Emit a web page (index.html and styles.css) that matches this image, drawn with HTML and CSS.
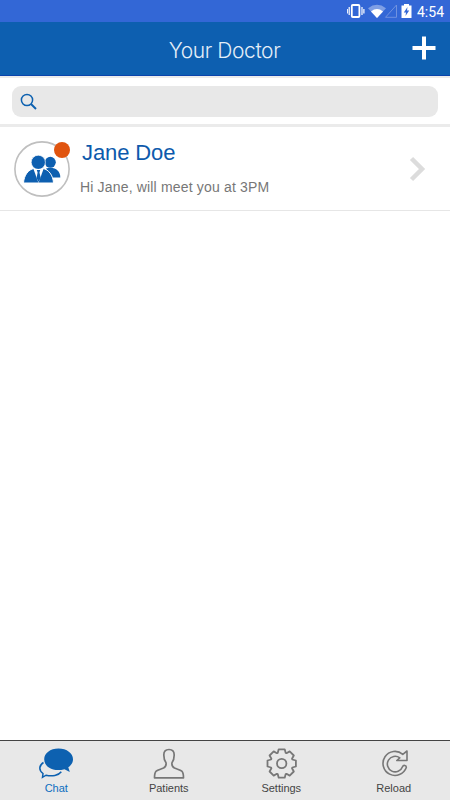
FILE: index.html
```html
<!DOCTYPE html>
<html lang="en">
<head>
    <meta charset="UTF-8">
    <meta name="viewport" content="width=device-width, initial-scale=1.0">
    <title>Your Doctor</title>
    <link rel="stylesheet" href="styles.css">
</head>
<body>
    <div class="app">
        <!-- Phone status bar -->
        <div class="status-bar">
            <svg class="status-icons" width="66" height="22" viewBox="0 0 66 22">
                <rect x="4.8" y="5" width="7.6" height="12" rx="1" fill="none" stroke="#fff" stroke-width="1.8"/>
                <path d="M2.200 7v8M15 7v8M.3 9v4.500M16.900 9v4.500" stroke="#fff" stroke-width="1.2"/>
                <path d="M21 8.200Q30 1.500 39 8.200L30 18z" fill="#7f9fe5"/>
                <path d="M24 11.400Q30 6.800 36 11.400L30 18z" fill="#fff"/>
                <path d="M38.500 17.300L49.500 5V17.300z" fill="none" stroke="#7092df"/>
                <path d="M54.500 5.500H57V4h5v1.500h2.500V18h-10z" fill="#fff"/>
                <path d="M60.500 7L56.800 12.500h2.200L58.500 16l3.700-5.500h-2.200z" fill="#3367d6"/>
            </svg>
            <span class="time">4:54</span>
        </div>

        <header class="header">
            <h1 class="title">Your Doctor</h1>
            <svg class="add" width="26" height="26" viewBox="0 0 26 26">
                <path d="M13 1.500v23M1.500 13h23" stroke="#fff" stroke-width="4"/>
            </svg>
        </header>

        <div class="search">
            <div class="search-box">
                <svg width="18" height="18" viewBox="0 0 18 18" fill="none" stroke="#0d61b0">
                    <circle cx="7" cy="7" r="5.600" stroke-width="1.500"/>
                    <path d="M11 11l5 5" stroke-width="2"/>
                </svg>
            </div>
        </div>

        <!-- Conversations -->
        <main class="list">
            <div class="chat-row">
                <div class="avatar">
                    <svg width="56" height="56" viewBox="0 0 56 56">
                        <circle cx="28" cy="28" r="27.100" fill="#fff" stroke="#bfbfbf" stroke-width="1.600"/>
                        <g fill="#0d5fb0">
                            <circle cx="36.300" cy="21.300" r="5.500"/>
                            <path d="M32 27.500C40 25 46.300 29 46.300 36.500H38z"/>
                            <path d="M9.500 42C10 34 14.500 28.500 20 27.500H29C34.500 28.500 39 34 39.500 42z" stroke="#fff" stroke-width="1"/>
                            <circle cx="24.300" cy="21.300" r="7.100" stroke="#fff" stroke-width=".7"/>
                        </g>
                        <path d="M19.500 28L24.500 42L29.500 28z" fill="#fff"/>
                        <path d="M22.800 29h3.400l-.7 2.500L26.700 37l-2.200 4-1.900-4 1-5.500z" fill="#0d5fb0"/>
                    </svg>
                    <span class="badge"></span>
                </div>
                <div class="chat-text">
                    <div class="name">Jane Doe</div>
                    <div class="message">Hi Jane, will meet you at 3PM</div>
                </div>
                <svg class="chevron" width="18" height="26" viewBox="0 0 18 26">
                    <path d="M2.500 2.500L13 13L2.500 23.500" fill="none" stroke="#dcdcdc" stroke-width="4.500"/>
                </svg>
            </div>
        </main>

        <nav class="tabs">
            <a class="tab active">
                <svg width="36" height="32" viewBox="0 0 36 32">
                    <path d="M5.500 14.500C.5 17.500.8 22.500 5 25.500L4.500 29.300L8 27.200C14 28.700 20.500 27.500 23.300 23.700" fill="none" stroke="#0d61b0" stroke-width="1.500"/>
                    <path d="M20.500.4C28.800.4 35 5.200 35 11.200C35 14.500 33.300 17.200 30.300 19.300L31.800 24L26.500 21.200C15 24.300 6.200 18.800 6.200 11.200C6.200 5.200 12.200.4 20.500.4z" fill="#0d61b0"/>
                </svg>
                <span>Chat</span>
            </a>
            <a class="tab">
                <svg width="32" height="32" viewBox="0 0 32 32" fill="none" stroke="#777" stroke-width="1.700" stroke-linejoin="round">
                    <path d="M16 1.500C12.500 1.500 10.800 3.600 10.800 7C10.800 10.500 11.600 12.800 13 14.700C13.500 17.500 12.600 18.900 10.500 20C7.800 21.300 5 21.600 3.200 23.200C1.700 24.600 1.500 27 1.500 29.800H30.500C30.500 27 30.300 24.600 28.800 23.200C27 21.600 24.200 21.300 21.500 20C19.400 18.900 18.500 17.500 19 14.700C20.400 12.800 21.200 10.500 21.200 7C21.200 3.600 19.500 1.500 16 1.500z"/>
                </svg>
                <span>Patients</span>
            </a>
            <a class="tab">
                <svg width="32" height="32" viewBox="-16.700 -15.500 32 32" fill="none" stroke="#777" stroke-width="1.800" stroke-linejoin="round">
                    <path d="M-4-10.600L-3-14.200H3L4-10.600L4.800-10.300L8-12.100L12.100-8L10.300-4.800L10.600-4L14.200-3V3L10.600 4L10.300 4.800L12.100 8L8 12.100L4.800 10.300L4 10.600L3 14.200H-3L-4 10.600L-4.800 10.300L-8 12.100L-12.100 8L-10.300 4.800L-10.600 4L-14.200 3V-3L-10.600-4L-10.300-4.800L-12.100-8L-8-12.100L-4.800-10.300z"/>
                    <circle r="4.700"/>
                </svg>
                <span>Settings</span>
            </a>
            <a class="tab">
                <svg width="32" height="32" viewBox="-4 -2 32 32" fill="none" stroke="#777" stroke-width="1.600" stroke-linejoin="round">
                    <path d="M20.800 4.300A12 12 0 1 0 24.300 17.500C24.500 15.200 21.400 14.600 20.500 16.700A7.800 7.800 0 1 1 17.800 7.800L14.800 10.500H25V1z"/>
                </svg>
                <span>Reload</span>
            </a>
        </nav>
    </div>
</body>
</html>
```
FILE: styles.css
```css
body {
    margin: 0;
    font-family: "Liberation Sans", Arial, sans-serif;
    background: #fff;
}
.app {
    display: flex;
    flex-direction: column;
    height: 100vh;
    overflow: hidden;
}
.status-bar {
    display: flex;
    justify-content: flex-end;
    align-items: center;
    gap: 4px;
    height: 22px;
    padding-right: 6px;
    background: #3367d6;
    color: #fff;
}
.time {
    font-family: Roboto, sans-serif;
    font-size: 14px;
    line-height: 22px;
    padding-top: 1px;
}
.header {
    display: grid;
    grid-template-columns: 1fr auto 1fr;
    align-items: center;
    box-sizing: border-box;
    height: 54px;
    padding: 0 13px 0 12px;
    background: #0d5fb0;
    border-bottom: 1px solid #0a44ac;
}
.title {
    grid-column: 2;
    margin: 4px 0 0;
    color: #e4eef8;
    font-family: Inter, sans-serif;
    font-size: 21px;
    font-weight: 300;
    letter-spacing: -0.4px;
    line-height: 26px;
}
.add {
    justify-self: end;
    margin-top: -2px;
}
.search {
    padding: 8px 12px 7px;
    border-top: 2px solid #ebebeb;
    border-bottom: 3px solid #ebebeb;
}
.search-box {
    display: flex;
    align-items: center;
    box-sizing: border-box;
    height: 31px;
    padding-left: 8px;
    background: #e8e8e8;
    border-radius: 9px;
}
.list {
    flex: 1;
}
.chat-row {
    display: flex;
    align-items: center;
    box-sizing: border-box;
    height: 84px;
    padding: 0 23px 0 14px;
    border-bottom: 1px solid #e6e6e6;
}
.avatar {
    position: relative;
    width: 56px;
    height: 56px;
}
.badge {
    position: absolute;
    top: 1px;
    right: 0;
    width: 16px;
    height: 16px;
    border-radius: 50%;
    background: #e0540f;
}
.chat-text {
    flex: 1;
    padding: 0 0 2px 10px;
}
.name {
    padding-left: 2px;
    color: #0d5aac;
    font-size: 22px;
    letter-spacing: -0.1px;
    line-height: 26px;
}
.message {
    margin-top: 12px;
    color: #777;
    font-size: 14px;
    letter-spacing: 0.17px;
    line-height: 18px;
}
.tabs {
    display: flex;
    box-sizing: border-box;
    height: 60px;
    background: #e8e8e8;
    border-top: 1px solid #444;
}
.tab {
    display: flex;
    flex: 1;
    flex-direction: column;
    align-items: center;
    padding-top: 7px;
    color: #444;
    font-size: 11px;
    line-height: 16px;
}
.tab svg {
    height: 32px;
}
.tab.active {
    color: #0d6dc0;
}
```
